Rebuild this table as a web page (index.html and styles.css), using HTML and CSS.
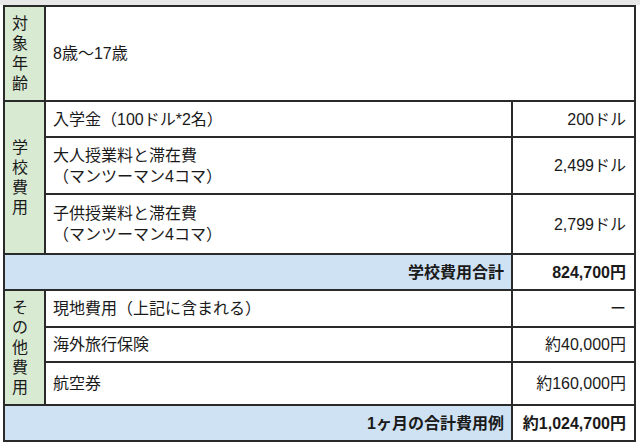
FILE: index.html
```html
<!DOCTYPE html>
<html lang="ja">
<head>
<meta charset="utf-8">
<title>費用</title>
<link rel="stylesheet" href="styles.css">
</head>
<body>
<div class="topband"></div>
<div class="sheet">
  <div class="cell label r1"><span class="stack">対象年齢</span></div>
  <div class="cell item r1c2">8歳〜17歳</div>

  <div class="cell label r2-4"><span class="stack">学校費用</span></div>
  <div class="cell item">入学金（100ドル*2名）</div>
  <div class="cell value">200ドル</div>
  <div class="cell item">大人授業料と滞在費<br>（マンツーマン4コマ）</div>
  <div class="cell value">2,499ドル</div>
  <div class="cell item">子供授業料と滞在費<br>（マンツーマン4コマ）</div>
  <div class="cell value">2,799ドル</div>

  <div class="cell total">学校費用合計</div>
  <div class="cell value bold">824,700円</div>

  <div class="cell label r6-8"><span class="stack">その他費用</span></div>
  <div class="cell item">現地費用（上記に含まれる）</div>
  <div class="cell value">ー</div>
  <div class="cell item">海外旅行保険</div>
  <div class="cell value">約40,000円</div>
  <div class="cell item">航空券</div>
  <div class="cell value">約160,000円</div>

  <div class="cell total">1ヶ月の合計費用例</div>
  <div class="cell value bold">約1,024,700円</div>
</div>
</body>
</html>
```

FILE: styles.css
```css
html, body {
  margin: 0;
  padding: 0;
  background: #ffffff;
}

body {
  font-family: "Liberation Sans", "Noto Sans CJK JP", sans-serif;
  font-size: 16px;
  color: #1a1a1a;
  width: 640px;
  height: 445px;
  overflow: hidden;
}

.topband {
  height: 5px;
  background: #e8e8e8;
}

.sheet {
  margin-left: 3px;
  width: 633px;
  box-sizing: border-box;
  display: grid;
  grid-template-columns: 39px 465px 121px;
  grid-template-rows: 93px 34px 55px 58px 34px 35px 33px 41px 34px;
  gap: 2px;
  padding: 2px;
  background: #2a2a2a;
}

.cell {
  background: #ffffff;
  display: flex;
  align-items: center;
  line-height: 21px;
  white-space: nowrap;
}

.label {
  background: #d9ead3;
  padding-left: 7px;
}

.stack {
  display: block;
  width: 16px;
  line-height: 20px;
  white-space: normal;
  word-break: break-all;
}

.r1 { grid-row: 1; grid-column: 1; }
.r2-4 { grid-row: 2 / span 3; grid-column: 1; }
.r6-8 { grid-row: 6 / span 3; grid-column: 1; }

.r1c2 {
  grid-column: 2 / span 2;
}

.item {
  padding-left: 7px;
}

.value {
  justify-content: flex-end;
  padding-right: 8px;
}

.bold {
  font-weight: bold;
}

.total {
  grid-column: 1 / span 2;
  background: #cfe2f3;
  justify-content: flex-end;
  padding-right: 7px;
  font-weight: bold;
}
```
